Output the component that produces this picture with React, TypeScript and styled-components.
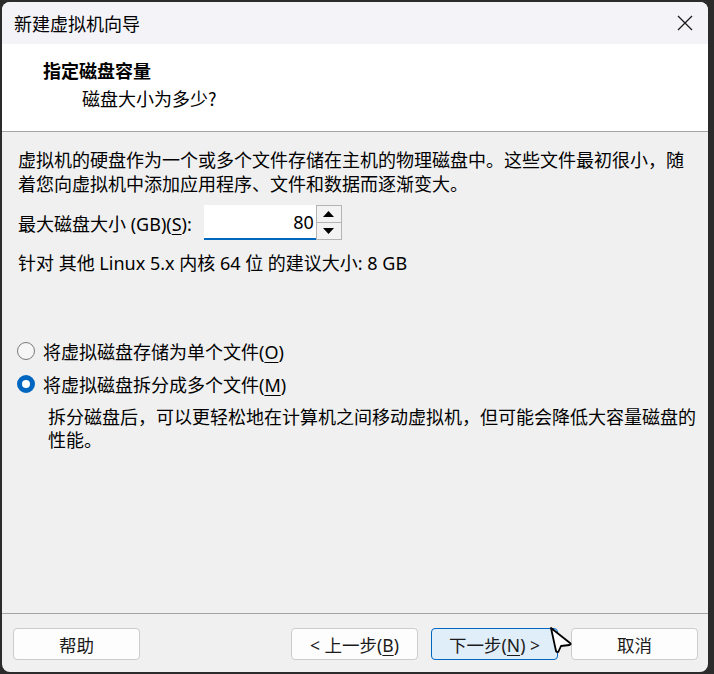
import React, { useState } from 'react';
import styled, { createGlobalStyle } from 'styled-components';

const GlobalStyle = createGlobalStyle`
  html, body {
    margin: 0;
    padding: 0;
    background: #2b2b2b;
  }
  body {
    font-family: "Noto Sans", "Noto Sans CJK SC", sans-serif;
    color: #000;
  }
`;

const Window = styled.div`
  position: relative;
  margin: 2px 6px 2px 2px;
  width: 706px;
  height: 670px;
  background: #f0f0f0;
  border-radius: 8px;
  overflow: hidden;
  display: flex;
  flex-direction: column;
`;

const TitleBar = styled.div`
  height: 42px;
  background: #f3f3f8;
  display: flex;
  align-items: center;
  justify-content: space-between;
  padding: 0 14px 0 12px;
  font-family: "Noto Sans CJK SC", sans-serif;
  font-size: 18px;
`;

const CloseButton = styled.button`
  border: none;
  background: transparent;
  padding: 0;
  width: 18px;
  height: 18px;
  display: flex;
  align-items: center;
  justify-content: center;
  cursor: pointer;
`;

const Header = styled.div`
  height: 88px;
  background: #fff;
  border-bottom: 1px solid #a5a5a5;
  padding: 12px 0 0 41px;
  box-sizing: border-box;
  font-family: "Noto Sans CJK SC", sans-serif;
  font-size: 18px;
`;

const HeaderTitle = styled.div`
  font-weight: 700;
  line-height: 28px;
`;

const HeaderSub = styled.div`
  padding-left: 39px;
  line-height: 28px;
`;

const Body = styled.div`
  flex: 1;
  padding: 16px 9px 0 16px;
  font-size: 18px;
`;

const Paragraph = styled.p`
  margin: 0;
  line-height: 24px;
`;

const SizeRow = styled.div`
  margin-top: 9px;
  display: flex;
  align-items: center;
  gap: 12px;
`;

const Mnemonic = styled.span`
  text-decoration: underline;
  text-underline-offset: 3px;
`;

const Spin = styled.div`
  display: flex;
  height: 35px;
`;

const SpinInput = styled.input`
  width: 112px;
  height: 35px;
  box-sizing: border-box;
  border: none;
  border-bottom: 2px solid #0067c0;
  background: #fff;
  text-align: right;
  padding: 0 2px 0 4px;
  font: inherit;
  font-size: 18px;
  outline: none;
`;

const SpinButtons = styled.div`
  width: 26px;
  box-sizing: border-box;
  border: 1px solid #b4b4b4;
  display: flex;
  flex-direction: column;
  background: #f3f3f3;
`;

const SpinButton = styled.button<{ $down?: boolean }>`
  flex: 1;
  border: none;
  border-top: ${p => (p.$down ? '1px solid #b4b4b4' : 'none')};
  background: #f3f3f3;
  padding: 0;
  display: flex;
  align-items: center;
  justify-content: center;
  cursor: pointer;
`;

const Recommend = styled.div`
  margin-top: 11px;
  line-height: 24px;
`;

const RadioGroup = styled.div`
  margin-top: 62px;
  display: flex;
  flex-direction: column;
  gap: 5px;
`;

const RadioRow = styled.label`
  display: flex;
  align-items: center;
  gap: 8px;
  height: 28px;
  margin-left: -1px;
  cursor: pointer;
`;

const RadioDot = styled.span<{ $checked: boolean }>`
  width: 18px;
  height: 18px;
  box-sizing: border-box;
  border-radius: 50%;
  border: ${p => (p.$checked ? '5px solid #0067c0' : '1px solid #7a7a7a')};
  background: ${p => (p.$checked ? '#fff' : '#f6f6f6')};
  flex-shrink: 0;
`;

const Description = styled.p`
  margin: 8px 0 0 30px;
  line-height: 23px;
`;

const Footer = styled.div`
  border-top: 1px solid #a5a5a5;
  padding: 14px 10px 12px 11px;
  display: flex;
  gap: 13px;
`;

const Spacer = styled.div`
  flex: 1;
`;

const DialogButton = styled.button<{ $primary?: boolean }>`
  width: 127px;
  height: 32px;
  box-sizing: border-box;
  border-radius: 4px;
  border: 1px solid ${p => (p.$primary ? '#0067c0' : '#cccccc')};
  background: ${p => (p.$primary ? '#e0eef9' : '#fdfdfd')};
  font-family: "Noto Sans", "Noto Sans CJK SC", sans-serif;
  font-size: 17.5px;
  color: #1b1b1b;
  padding: 0;
  cursor: pointer;
`;

const Cursor = styled.svg`
  position: absolute;
  left: 546px;
  top: 622px;
  pointer-events: none;
`;

const Triangle = ({ down }: { down?: boolean }) => (
  <svg width="11" height="6" viewBox="0 0 11 6">
    <path d={down ? 'M0 0 H11 L5.5 6 Z' : 'M0 6 H11 L5.5 0 Z'} fill="#000" />
  </svg>
);

export default function App() {
  const [size, setSize] = useState(80);
  const [mode, setMode] = useState<'single' | 'multi'>('multi');

  return (
    <>
      <GlobalStyle />
      <Window>
        <TitleBar>
          <span>新建虚拟机向导</span>
          <CloseButton aria-label="关闭">
            <svg width="16" height="16" viewBox="0 0 16 16">
              <path d="M1 1 L15 15 M15 1 L1 15" stroke="#1a1a1a" strokeWidth="1.3" />
            </svg>
          </CloseButton>
        </TitleBar>

        <Header>
          <HeaderTitle>指定磁盘容量</HeaderTitle>
          <HeaderSub>磁盘大小为多少?</HeaderSub>
        </Header>

        <Body>
          <Paragraph>
            虚拟机的硬盘作为一个或多个文件存储在主机的物理磁盘中。这些文件最初很小，随着您向虚拟机中添加应用程序、文件和数据而逐渐变大。
          </Paragraph>

          <SizeRow>
            <span>
              最大磁盘大小 (GB)(<Mnemonic>S</Mnemonic>):
            </span>
            <Spin>
              <SpinInput
                value={size}
                onChange={e => setSize(Number(e.target.value) || 0)}
              />
              <SpinButtons>
                <SpinButton onClick={() => setSize(size + 1)}>
                  <Triangle />
                </SpinButton>
                <SpinButton $down onClick={() => setSize(Math.max(1, size - 1))}>
                  <Triangle down />
                </SpinButton>
              </SpinButtons>
            </Spin>
          </SizeRow>

          <Recommend>针对 其他 Linux 5.x 内核 64 位 的建议大小: 8 GB</Recommend>

          <RadioGroup>
            <RadioRow onClick={() => setMode('single')}>
              <RadioDot $checked={mode === 'single'} />
              <span>
                将虚拟磁盘存储为单个文件(<Mnemonic>O</Mnemonic>)
              </span>
            </RadioRow>
            <RadioRow onClick={() => setMode('multi')}>
              <RadioDot $checked={mode === 'multi'} />
              <span>
                将虚拟磁盘拆分成多个文件(<Mnemonic>M</Mnemonic>)
              </span>
            </RadioRow>
          </RadioGroup>

          <Description>
            拆分磁盘后，可以更轻松地在计算机之间移动虚拟机，但可能会降低大容量磁盘的性能。
          </Description>
        </Body>

        <Footer>
          <DialogButton>帮助</DialogButton>
          <Spacer />
          <DialogButton>
            &lt; 上一步(<Mnemonic>B</Mnemonic>)
          </DialogButton>
          <DialogButton $primary>
            下一步(<Mnemonic>N</Mnemonic>) &gt;
          </DialogButton>
          <DialogButton>取消</DialogButton>
        </Footer>

        <Cursor width="28" height="32" viewBox="0 0 28 32">
          <path
            d="M3 4 L8 27 Q9 29 10.5 27.5 L13 22 L21.5 21 Q23.5 20.5 22 19 Z"
            fill="#fff"
            stroke="#000"
            strokeWidth="1.8"
            strokeLinejoin="round"
          />
        </Cursor>
      </Window>
    </>
  );
}
